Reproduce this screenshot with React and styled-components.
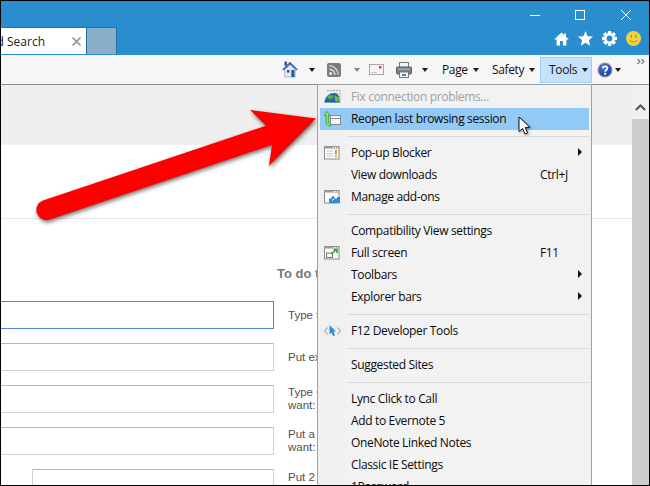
import React from "react";
import styled, { createGlobalStyle } from "styled-components";

const Global = createGlobalStyle`
  html, body { margin: 0; padding: 0; background: #fff; overflow: hidden; }
`;

const Frame = styled.div`
  position: relative;
  box-sizing: border-box;
  width: 650px;
  height: 486px;
  border: 1px solid #000;
  overflow: hidden;
  display: flex;
  flex-direction: column;
  background: #fff;
  font-family: "Open Sans", "Liberation Sans", sans-serif;
`;

const TitleBar = styled.header`
  flex: none;
  height: 54px;
  background: #2a8dcd;
  display: flex;
  flex-direction: column;
`;
const CaptionRow = styled.div`
  box-sizing: border-box;
  height: 26px;
  padding-top: 2px;
  display: flex;
  justify-content: flex-end;
`;
const CaptionButton = styled.div`
  width: 46px;
  display: flex;
  align-items: center;
  justify-content: center;
  svg { display: block; overflow: visible; }
`;
const TabRow = styled.div`
  height: 28px;
  display: flex;
  align-items: flex-end;
`;
const ActiveTab = styled.div`
  box-sizing: border-box;
  width: 86px;
  height: 28px;
  background: #fff;
  border-top: 1px solid #2470a0;
  border-right: 1px solid #2470a0;
  border-bottom: 1px solid #2a8dcd;
  padding-right: 5px;
  display: flex;
  align-items: center;
  justify-content: flex-end;
  overflow: hidden;
`;
const TabTitle = styled.span`
  flex: none;
  font-size: 12px;
  color: #222;
  white-space: nowrap;
`;
const TabClose = styled.svg`
  flex: none;
  margin-left: 27px;
`;
const EmptyTab = styled.div`
  box-sizing: border-box;
  width: 30px;
  height: 28px;
  background: #8aafc8;
  border-top: 1px solid #2470a0;
  border-right: 1px solid #2470a0;
  border-bottom: 1px solid #2a8dcd;
`;
const QuickIcons = styled.div`
  margin-left: auto;
  margin-top: 4px;
  padding-right: 8px;
  align-self: flex-start;
  display: flex;
  gap: 9px;
`;

const Toolbar = styled.nav`
  flex: none;
  box-sizing: border-box;
  height: 30px;
  background: #f6f6f6;
  border-bottom: 1px solid #8c8c8c;
  padding-right: 4px;
  display: flex;
  align-items: center;
  justify-content: flex-end;
  font-size: 12px;
  color: #111;
`;
const ToolIcon = styled.span`
  flex: none;
  display: block;
  width: ${p => p.$w}px;
  margin-left: ${p => p.$ml}px;
  svg { display: block; }
`;
const Caret = styled.i`
  flex: none;
  display: block;
  width: 0;
  height: 0;
  margin-left: ${p => p.$ml || 0}px;
  border-left: 3.5px solid transparent;
  border-right: 3.5px solid transparent;
  border-top: 4px solid ${p => (p.$muted ? "#888" : "#1c1c1c")};
`;
const ToolText = styled.span`
  flex: none;
  box-sizing: border-box;
  width: ${p => p.$w}px;
  margin-left: ${p => p.$ml}px;
  display: flex;
  align-items: center;
  justify-content: space-between;
  letter-spacing: -0.35px;
`;
const ToolButtonActive = styled.span`
  flex: none;
  box-sizing: border-box;
  width: 52px;
  height: 26px;
  margin-left: 5px;
  padding: 0 3px 0 8px;
  display: flex;
  align-items: center;
  justify-content: space-between;
  background: #c6e2f8;
  border: 1px solid #a3d0f2;
  letter-spacing: -0.35px;
`;
const Overflow = styled.span`
  flex: none;
  align-self: flex-start;
  margin: 4px 0 0 16px;
  display: block;
  svg { display: block; }
`;

const Body = styled.div`
  flex: 1;
  min-height: 0;
  display: flex;
`;
const Main = styled.main`
  flex: 1;
  min-width: 0;
  display: flex;
  flex-direction: column;
`;
const Band = styled.div`
  flex: none;
  height: 60px;
  background: #efefef;
`;
const Rule = styled.div`
  flex: none;
  height: 1px;
  margin-top: 73px;
  background: #e8e8e8;
`;
const FormTitle = styled.h2`
  margin: 46px 0 0 276px;
  height: 18px;
  font: bold 13px/18px "Liberation Sans", Arial, sans-serif;
  color: #777;
  white-space: nowrap;
`;
const Form = styled.div`
  margin-top: 18px;
  display: grid;
  grid-template-columns: 273px 1fr;
  grid-auto-rows: 28px;
  row-gap: 14px;
  column-gap: 14px;
  font: 11.5px/13px "Liberation Sans", Arial, sans-serif;
  color: #505050;
`;
const Field = styled.div`
  box-sizing: border-box;
  height: 28px;
  background: #fff;
  border: 1px solid ${p => (p.$focus ? "#4f86d8" : "#d0d0d0")};
  border-top-color: ${p => (p.$focus ? "#4f86d8" : "#b8b8b8")};
  border-left: ${p => (p.$inset ? undefined : "none")};
  flex: 1;
`;
const FieldCell = styled.div`
  display: flex;
  align-items: flex-end;
  min-width: 0;
`;
const FieldPrefix = styled.span`
  flex: none;
  width: 31px;
  color: #111;
  font-size: 12px;
  line-height: 16px;
  margin-bottom: -1px;
  align-self: center;
  padding-top: 12px;
`;
const Hint = styled.div`
  white-space: nowrap;
  align-self: center;
`;
const HintTop = styled(Hint)`
  align-self: start;
  margin-top: 2px;
`;

const Scrollbar = styled.aside`
  flex: none;
  width: 17px;
  background: #cdcdcd;
`;
const ScrollUp = styled.div`
  box-sizing: border-box;
  height: 34px;
  background: #f0f0f0;
  padding-top: 19px;
  display: flex;
  justify-content: center;
  svg { display: block; }
`;

const Menu = styled.div`
  position: absolute;
  left: 316px;
  top: 83px;
  bottom: 0;
  width: 275px;
  box-sizing: border-box;
  border: 1px solid #a0a0a0;
  border-bottom: none;
  padding: 1px 2px 0 2px;
  background: linear-gradient(90deg, #f0f0f0 28px, #f2f2f2 28px);
  overflow: hidden;
  font-size: 12px;
  color: #0a0a0a;
`;
const MenuRow = styled.div`
  height: 22px;
  padding-left: 4px;
  display: grid;
  grid-template-columns: 27px 189px 38px 5px;
  align-items: center;
  background: ${p => (p.$hot ? "#91c9f7" : "transparent")};
  color: ${p => (p.$off ? "#a0a0a0" : "inherit")};
  letter-spacing: -0.34px;
  white-space: nowrap;
  svg { display: block; }
`;
const MenuText = styled.span`
  padding-bottom: 2px;
`;
const MenuSep = styled.div`
  height: 12px;
  margin-left: 27px;
  display: flex;
  align-items: center;
  &::before { content: ""; flex: 1; height: 1px; background: #d7d7d7; }
`;
const SubArrow = styled.i`
  display: block;
  width: 0;
  height: 0;
  border-top: 4px solid transparent;
  border-bottom: 4px solid transparent;
  border-left: 4px solid #111;
  margin-top: -2px;
`;

const ArrowArt = styled.svg`
  position: absolute;
  left: -1px;
  top: -1px;
  width: 330px;
  height: 240px;
  overflow: visible;
  filter: drop-shadow(1.5px 2.5px 2px rgba(0, 0, 0, 0.55));
`;
const Pointer = styled.svg`
  position: absolute;
  left: 517px;
  top: 115px;
  filter: drop-shadow(1px 1px 1px rgba(0, 0, 0, 0.4));
`;

const HomeWhite = () => (
  <svg width="15" height="15" viewBox="0 0 15 15">
    <path d="M7.5 1.5 0.2 8.4H2.6V14.4H6V10h3v4.4h3.4V8.4h2.4L12 5.7V2.6H10.2V4Z" fill="#fff" />
  </svg>
);
const StarWhite = () => (
  <svg width="15" height="15" viewBox="0 0 15 15">
    <path d="M7.5 0 9.6 5.2 15 5.6 10.9 9.2 12.2 14.8 7.5 11.8 2.8 14.8 4.1 9.2 0 5.6 5.4 5.2Z" fill="#fff" />
  </svg>
);
const GearWhite = () => (
  <svg width="15" height="15" viewBox="0 0 15 15">
    {[0, 45, 90, 135].map(a => (
      <rect key={a} x="5.8" y="0" width="3.4" height="15" fill="#fff" transform={`rotate(${a} 7.5 7.5)`} />
    ))}
    <circle cx="7.5" cy="7.5" r="5.4" fill="#fff" />
    <circle cx="7.5" cy="7.5" r="2.9" fill="#2a8dcd" />
  </svg>
);
const Smiley = () => (
  <svg width="15" height="15" viewBox="0 0 15 15">
    <circle cx="7.5" cy="7.5" r="7.5" fill="#f4d23e" />
    <rect x="4.6" y="4" width="1.4" height="2.6" fill="#ab8f22" />
    <rect x="9" y="4" width="1.4" height="2.6" fill="#ab8f22" />
    <path d="M3.6 8.8C5 11.6 10 11.6 11.4 8.8" fill="none" stroke="#ab8f22" strokeWidth="1" />
  </svg>
);
const HouseColor = () => (
  <svg width="16" height="17" viewBox="0 0 16 17">
    <path d="M2.7 8.8 8 3.6 13.3 8.8V16H2.7Z" fill="#e4e8ee" stroke="#8a93a0" strokeWidth=".6" />
    <path d="M8 .8 .2 8.4 1.6 9.4 8 3.4 14.4 9.4 15.8 8.4Z" fill="#3f63c4" />
    <rect x="2.5" y="0.6" width="2.4" height="4" fill="#2b4aa8" />
    <rect x="5" y="9" width="2.4" height="2.6" fill="#33507a" />
    <rect x="9.4" y="9" width="3" height="7" fill="#1f55a8" />
  </svg>
);
const RssIcon = () => (
  <svg width="14" height="14" viewBox="0 0 14 14">
    <rect width="14" height="14" rx="2" fill="#7c7c7c" />
    <circle cx="3.6" cy="10.4" r="1.5" fill="#e8e8e8" />
    <path d="M2.3 6.2A5.4 5.4 0 0 1 7.8 11.7" fill="none" stroke="#e0e0e0" strokeWidth="1.5" />
    <path d="M2.3 2.8A9 9 0 0 1 11.2 11.7" fill="none" stroke="#d0d0d0" strokeWidth="1.5" />
  </svg>
);
const MailIcon = () => (
  <svg width="15" height="11" viewBox="0 0 15 11">
    <rect x=".5" y=".5" width="14" height="10" fill="#f4f4f4" stroke="#a8a8a8" />
    <path d="M2 8.5H8" stroke="#c9c9c9" />
    <rect x="10" y="2" width="2.5" height="2.5" fill="#d84040" />
  </svg>
);
const PrintIcon = () => (
  <svg width="16" height="16" viewBox="0 0 16 16">
    <rect x="3.5" y=".5" width="9" height="5" fill="#f4f4f4" stroke="#777" />
    <rect x=".5" y="5" width="15" height="7" rx="1.2" fill="#7d8286" stroke="#555a5e" />
    <rect x="2" y="6.6" width="12" height="1.2" fill="#b0b4b7" />
    <rect x="3.5" y="10" width="9" height="5.5" fill="#f6f6f6" stroke="#777" />
    <rect x="6" y="12" width="4" height="2" fill="#2f8fb4" />
  </svg>
);
const HelpIcon = () => (
  <svg width="16" height="16" viewBox="0 0 16 16">
    <defs>
      <radialGradient id="hb" cx=".4" cy=".3" r=".8">
        <stop offset="0" stopColor="#4d7fe0" />
        <stop offset="1" stopColor="#12309a" />
      </radialGradient>
    </defs>
    <circle cx="8" cy="8" r="7.6" fill="#8d95a5" />
    <circle cx="8" cy="8" r="6.2" fill="url(#hb)" />
    <path d="M5.7 6.2C5.8 3.7 10.4 3.7 10.4 6.2 10.4 7.8 8.2 7.8 8.2 9.8" fill="none" stroke="#fff" strokeWidth="1.7" />
    <rect x="7.2" y="10.8" width="2" height="2" fill="#fff" />
  </svg>
);
const Chevrons = () => (
  <svg width="8" height="5" viewBox="0 0 8 5">
    <path d="M.5 0 3 2.5.5 5M4.5 0 7 2.5 4.5 5" fill="none" stroke="#6a6aa0" strokeWidth="1.1" />
  </svg>
);

const GlobeIcon = () => (
  <svg width="17" height="16" viewBox="0 0 17 16">
    <path d="M3 1.5H16V14" fill="none" stroke="#9aa0a6" strokeDasharray="2 1" />
    <path d="M.5 13C1 7 6 3.5 11 4c3.6.4 4.6 4 4.5 9Z" fill="#1f6fb0" />
    <path d="M3 8c2-2.4 4.6-2.6 6-1 1 1.4-1 3-3.2 3.2Z" fill="#5fb23c" />
    <path d="M10.5 6.2 14.5 8.6 14.8 13H11.4Z" fill="#79b93f" />
    <path d="M.5 13H15.5" stroke="#0f4a80" strokeWidth="1" />
  </svg>
);
const ReopenIcon = () => (
  <svg width="17" height="16" viewBox="0 0 17 16">
    <rect x="6.5" y="4.5" width="10" height="9" fill="#f6f6f6" stroke="#8d8d8d" />
    <path d="M6.5 7.5H16.5" stroke="#8d8d8d" />
    <path d="M3 .5 6 4.4H4.4V11C4.4 12.4 5.4 13 7 13V15C3.8 15 2.2 13.6 2.2 11V4.4H.2Z" fill="#9be87c" stroke="#2f9f1f" strokeWidth=".8" />
  </svg>
);
const FrameBase = ({ children }) => (
  <svg width="16" height="14" viewBox="0 0 16 14">
    <rect x=".5" y=".5" width="14.5" height="12.5" fill="#fdfdfd" stroke="#8a8a8a" />
    <rect x=".5" y=".5" width="14.5" height="2" fill="#9a9a9a" />
    <path d="M9 1.5H14" stroke="#fff" strokeDasharray="1 1" />
    {children}
  </svg>
);
const PopupIcon = () => (
  <FrameBase>
    <path d="M2.5 5H9M2.5 7.5H9M2.5 10H9" stroke="#c4c4c4" />
    <rect x="11" y="4" width="1.8" height="4.4" fill="#e9881c" />
    <rect x="11" y="9.4" width="1.8" height="1.8" fill="#e9881c" />
  </FrameBase>
);
const AddonIcon = () => (
  <FrameBase>
    <path d="M5 13V8.5H7.6C7.2 7 8 6 9 6s1.8 1 1.4 2.5H13V7h3V13Z" fill="#2a8fd8" />
    <path d="M8 10.5 10 9" stroke="#fff" />
  </FrameBase>
);
const FullIcon = () => (
  <FrameBase>
    <rect x="2.5" y="7" width="6" height="4.5" fill="#fff" stroke="#777" />
    <path d="M7 8 12 4M9.5 3.6H13V7" fill="none" stroke="#2ea52e" strokeWidth="1.6" />
  </FrameBase>
);
const DevIcon = () => (
  <svg width="17" height="12" viewBox="0 0 17 12">
    <path d="M3.5 2.5 .7 6 3.5 9.5M13.5 2.5 16.3 6 13.5 9.5" fill="none" stroke="#8f8f8f" />
    <path d="M5.5 0 12 6.4H9.6L11 10.4 9 11 7.6 7.4 5.5 9.4Z" fill="#2c8fe0" />
  </svg>
);

const Row = ({ icon, label, shortcut, sub, ...rest }) => (
  <MenuRow {...rest}>
    <span>{icon}</span>
    <MenuText>{label}</MenuText>
    <MenuText>{shortcut}</MenuText>
    {sub ? <SubArrow /> : <span />}
  </MenuRow>
);

export default function App() {
  return (
    <Frame>
      <Global />
      <TitleBar>
        <CaptionRow>
          <CaptionButton>
            <svg width="10" height="10" viewBox="0 0 10 10"><path d="M1 5.5H11" stroke="#fff" /></svg>
          </CaptionButton>
          <CaptionButton>
            <svg width="10" height="10" viewBox="0 0 10 10"><rect x=".5" y=".5" width="9" height="9" fill="none" stroke="#fff" /></svg>
          </CaptionButton>
          <CaptionButton>
            <svg width="10" height="10" viewBox="0 0 10 10"><path d="M0 0 10 10M10 0 0 10" stroke="#fff" /></svg>
          </CaptionButton>
        </CaptionRow>
        <TabRow>
          <ActiveTab>
            <TabTitle>Advanced Search</TabTitle>
            <TabClose width="9" height="9" viewBox="0 0 9 9">
              <path d="M.5.5 8.5 8.5M8.5.5.5 8.5" stroke="#9a9a9a" strokeWidth="1.7" />
            </TabClose>
          </ActiveTab>
          <EmptyTab />
          <QuickIcons>
            <HomeWhite />
            <StarWhite />
            <GearWhite />
            <Smiley />
          </QuickIcons>
        </TabRow>
      </TitleBar>

      <Toolbar>
        <ToolIcon $w={16} $ml={0}><HouseColor /></ToolIcon>
        <Caret $ml={11} />
        <ToolIcon $w={14} $ml={12}><RssIcon /></ToolIcon>
        <Caret $ml={13} $muted />
        <ToolIcon $w={15} $ml={9}><MailIcon /></ToolIcon>
        <ToolIcon $w={16} $ml={12}><PrintIcon /></ToolIcon>
        <Caret $ml={10} />
        <ToolText $w={37} $ml={14}>Page<Caret /></ToolText>
        <ToolText $w={43} $ml={13}>Safety<Caret /></ToolText>
        <ToolButtonActive>Tools<Caret /></ToolButtonActive>
        <ToolIcon $w={16} $ml={5}><HelpIcon /></ToolIcon>
        <Caret $ml={2} />
        <Overflow><Chevrons /></Overflow>
      </Toolbar>

      <Body>
        <Main>
          <Band />
          <Rule />
          <FormTitle>To do this</FormTitle>
          <Form>
            <Field $focus />
            <Hint>Type the</Hint>
            <Field />
            <Hint>Put exact</Hint>
            <Field />
            <Hint>Type OR<br />want:</Hint>
            <Field />
            <Hint>Put a sign<br />want:</Hint>
            <FieldCell>
              <FieldPrefix>to</FieldPrefix>
              <Field $inset />
            </FieldCell>
            <HintTop>Put 2 periods</HintTop>
          </Form>
        </Main>
        <Scrollbar>
          <ScrollUp>
            <svg width="11" height="7" viewBox="0 0 11 7">
              <path d="M.8 6 5.5 1.5 10.2 6" fill="none" stroke="#555" strokeWidth="2" />
            </svg>
          </ScrollUp>
        </Scrollbar>
      </Body>

      <ArrowArt viewBox="0 0 330 240">
        <path d="M250 110 316 118.5 269 166 272 145 50 219.5A10 10 0 0 1 43 200.5L266 125.7Z" fill="#fe0000" />
      </ArrowArt>

      <Menu>
        <Row icon={<GlobeIcon />} label="Fix connection problems..." $off />
        <Row icon={<ReopenIcon />} label="Reopen last browsing session" $hot />
        <MenuSep />
        <Row icon={<PopupIcon />} label="Pop-up Blocker" sub />
        <Row label="View downloads" shortcut="Ctrl+J" />
        <Row icon={<AddonIcon />} label="Manage add-ons" />
        <MenuSep />
        <Row label="Compatibility View settings" />
        <Row icon={<FullIcon />} label="Full screen" shortcut="F11" />
        <Row label="Toolbars" sub />
        <Row label="Explorer bars" sub />
        <MenuSep />
        <Row icon={<DevIcon />} label="F12 Developer Tools" />
        <MenuSep />
        <Row label="Suggested Sites" />
        <MenuSep />
        <Row label="Lync Click to Call" />
        <Row label="Add to Evernote 5" />
        <Row label="OneNote Linked Notes" />
        <Row label="Classic IE Settings" />
        <Row label="1Password" />
      </Menu>

      <Pointer width="13" height="20" viewBox="0 0 13 20">
        <path d="M1 1V15.5L4.6 12.4 7 18 9.6 16.9 7.2 11.4H12Z" fill="#fff" stroke="#111" strokeWidth="1" />
      </Pointer>
    </Frame>
  );
}
